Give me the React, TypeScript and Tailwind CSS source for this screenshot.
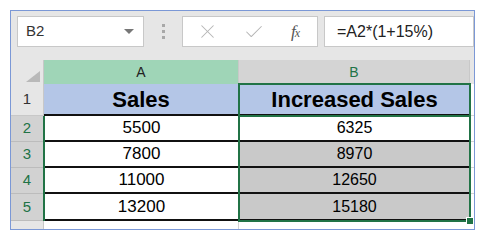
import React from 'react';
import { X, Check } from 'lucide-react';

const rows = [
  { n: '2', a: '5500', b: '6325', h: 'h-[26px]', active: true },
  { n: '3', a: '7800', b: '8970', h: 'h-[26px]', active: false },
  { n: '4', a: '11000', b: '12650', h: 'h-[26px]', active: false },
  { n: '5', a: '13200', b: '15180', h: 'h-[27px]', active: false },
];

const App: React.FC = () => {
  return (
    <div className="w-[486px] h-[242px] bg-white pl-[10px] pt-[10px] font-['Liberation_Sans',Arial,sans-serif]">
      <div className="w-[465px] h-[220px] border border-[#7b98d6] bg-[#e6e6e6] overflow-hidden flex flex-col">
        {/* Formula bar */}
        <div className="h-[49px] shrink-0 flex items-start pt-[5px] pl-[6px]">
          <div className="w-[127px] h-[31px] bg-white border border-[#c8c8c8] flex items-center justify-between pl-[8px] pr-[9px]">
            <span className="text-[15px] text-[#333]">B2</span>
            <span className="w-0 h-0 border-l-[5px] border-r-[5px] border-t-[5px] border-l-transparent border-r-transparent border-t-[#777]" />
          </div>
          <div className="w-[38px] h-[31px] flex flex-col items-center justify-center gap-[3px]">
            <span className="w-[3px] h-[3px] bg-[#a8a8a8]" />
            <span className="w-[3px] h-[3px] bg-[#a8a8a8]" />
            <span className="w-[3px] h-[3px] bg-[#a8a8a8]" />
          </div>
          <div className="w-[136px] h-[31px] bg-white border border-[#c8c8c8] flex items-center">
            <div className="w-[47px] flex justify-center pl-[2px]">
              <X size={23} strokeWidth={1.1} color="#b4b4b4" />
            </div>
            <div className="w-[47px] flex justify-center">
              <Check size={22} strokeWidth={1.1} color="#b4b4b4" />
            </div>
            <div className="w-[36px] flex justify-center">
              <span className="font-['Liberation_Serif',serif] italic text-[17px] text-[#555] tracking-[-1px]">
                f<span className="text-[12px]">x</span>
              </span>
            </div>
          </div>
          <div className="flex-1 h-[31px] ml-[6px] bg-white border border-[#c8c8c8] flex items-center pl-[12px]">
            <span className="text-[16px] text-[#222]">=A2*(1+15%)</span>
          </div>
        </div>

        {/* Grid */}
        <div className="relative flex-1 flex flex-col">
          {/* Column headers */}
          <div className="h-[24px] flex shrink-0">
            <div className="w-[33px] bg-[#e6e6e6] border-r border-[#c8c8c8] flex items-end justify-end pr-[3px] pb-[2px]">
              <span className="w-0 h-0 border-b-[11px] border-l-[14px] border-b-[#b9b9b9] border-l-transparent" />
            </div>
            <div className="w-[195px] bg-[#9fd5b7] border-r border-[#c8c8c8] flex items-center justify-center text-[14px] text-[#222]">A</div>
            <div className="w-[231px] bg-[#d4d4d4] border-r border-[#c8c8c8] flex items-center justify-center text-[14px] text-[#217346]">B</div>
            <div className="flex-1 bg-[#e6e6e6]" />
          </div>

          {/* Row 1 */}
          <div className="h-[32px] flex shrink-0">
            <div className="w-[33px] bg-[#e6e6e6] border-r border-b border-[#c8c8c8] flex items-center justify-center text-[15px] text-[#333]">1</div>
            <div className="w-[195px] bg-[#b4c6e7] border-b-2 border-r border-[#111] flex items-center justify-center font-bold text-[22px] text-black">Sales</div>
            <div className="w-[231px] bg-[#b4c6e7] border-b-2 border-[#111] flex items-center justify-center font-bold text-[22px] text-black">Increased Sales</div>
            <div className="flex-1 bg-white border-b border-[#d4d4d4]" />
          </div>

          {/* Data rows */}
          {rows.map((r) => (
            <div key={r.n} className={`${r.h} flex shrink-0`}>
              <div className="w-[33px] bg-[#d2d2d2] border-r border-b border-[#bcbcbc] flex items-center justify-center text-[15px] text-[#217346]">{r.n}</div>
              <div className="w-[195px] bg-white border-b-2 border-[#111] flex items-center justify-center text-[17px] text-black">{r.a}</div>
              <div className={`w-[231px] ${r.active ? 'bg-white' : 'bg-[#c9c9c9]'} border-b-2 border-[#111] flex items-center justify-center text-[16px] text-black`}>{r.b}</div>
              <div className="flex-1 bg-white border-b border-[#d4d4d4]" />
            </div>
          ))}

          {/* Empty row */}
          <div className="flex-1 flex">
            <div className="w-[33px] bg-[#e6e6e6] border-r border-[#c8c8c8]" />
            <div className="w-[195px] bg-white border-r border-[#d4d4d4]" />
            <div className="w-[231px] bg-white" />
            <div className="flex-1 bg-white" />
          </div>

          {/* Selection outlines */}
          <div className="absolute left-[227px] top-[23px] w-[233px] h-[139px] border-2 border-[#217346] pointer-events-none" />
          <div className="absolute left-[227px] top-[55px] w-[233px] h-[2px] bg-[#217346]" />
          <div className="absolute left-[32px] top-[56px] w-[2px] h-[105px] bg-[#217346]" />
          <div className="absolute left-[455px] top-[157px] w-[8px] h-[8px] bg-[#217346] border border-white" />
        </div>
      </div>
    </div>
  );
};

export default App;
